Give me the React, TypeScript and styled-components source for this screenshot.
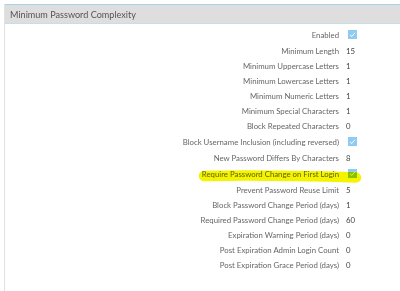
import React from "react";
import styled, { createGlobalStyle } from "styled-components";

const GlobalStyle = createGlobalStyle`
  body {
    margin: 0;
    background: #ffffff;
    font-family: Lato, "Open Sans", sans-serif;
  }
`;

type Setting = { label: string; value?: string; check?: boolean };

const settings: Setting[] = [
  { label: "Enabled", check: true },
  { label: "Minimum Length", value: "15" },
  { label: "Minimum Uppercase Letters", value: "1" },
  { label: "Minimum Lowercase Letters", value: "1" },
  { label: "Minimum Numeric Letters", value: "1" },
  { label: "Minimum Special Characters", value: "1" },
  { label: "Block Repeated Characters", value: "0" },
  { label: "Block Username Inclusion (including reversed)", check: true },
  { label: "New Password Differs By Characters", value: "8" },
  { label: "Require Password Change on First Login", check: true },
  { label: "Prevent Password Reuse Limit", value: "5" },
  { label: "Block Password Change Period (days)", value: "1" },
  { label: "Required Password Change Period (days)", value: "60" },
  { label: "Expiration Warning Period (days)", value: "0" },
  { label: "Post Expiration Admin Login Count", value: "0" },
  { label: "Post Expiration Grace Period (days)", value: "0" },
];

const Check = () => (
  <svg width="7" height="7" viewBox="0 0 10 10">
    <path d="M1.5 5.6 L4 7.8 L8.6 2.4" fill="none" stroke="#fff" strokeWidth="1.4" />
  </svg>
);

const App: React.FC = () => (
  <>
    <GlobalStyle />
    <Page>
      <Panel>
        <Header>Minimum Password Complexity</Header>
        <Grid>
          {settings.map((s) => (
            <React.Fragment key={s.label}>
              <Label tall={!!s.check}>{s.label}</Label>
              <Value tall={!!s.check}>
                {s.check ? (
                  <Box>
                    <Check />
                  </Box>
                ) : (
                  s.value
                )}
              </Value>
            </React.Fragment>
          ))}
        </Grid>
        {/* highlighter stroke someone drew over the screenshot */}
        <Marker width="170" height="20" viewBox="0 0 170 20">
          <path d="M6 11 C 50 10, 110 11, 158 12.5" fill="none" stroke="#f4f400" strokeWidth="10.5" strokeLinecap="round" />
        </Marker>
      </Panel>
    </Page>
  </>
);

export default App;

const Page = styled.div`
  padding: 4px 0 0 4px;
  height: 287px;
`;

const Panel = styled.div`
  position: relative;
  height: 100%;
  border-left: 1px solid #e2e2e2;
`;

const Header = styled.div`
  height: 18px;
  background: #dedede;
  border-top: 1px solid #a8d3e6;
  border-bottom: 1px solid #c5dfe8;
  padding-left: 5px;
  display: flex;
  align-items: center;
  font-size: 9.1px;
  color: #555;
`;

const Grid = styled.div`
  display: grid;
  grid-template-columns: 334px auto;
  column-gap: 7px;
  padding-top: 2px;
  font-size: 7.8px;
`;

const Label = styled.div<{ tall: boolean }>`
  height: ${({ tall }) => (tall ? 17 : 15)}px;
  display: flex;
  align-items: center;
  justify-content: flex-end;
  color: #666;
  white-space: nowrap;
`;

const Value = styled.div<{ tall: boolean }>`
  height: ${({ tall }) => (tall ? 17 : 15)}px;
  display: flex;
  align-items: center;
  color: #444;
`;

const Box = styled.span`
  width: 9px;
  height: 9px;
  background: #8fcaf0;
  display: flex;
  align-items: center;
  justify-content: center;
  margin-left: 2px;
`;

const Marker = styled.svg`
  position: absolute;
  left: 193px;
  top: 161px;
  mix-blend-mode: multiply;
  pointer-events: none;
`;
